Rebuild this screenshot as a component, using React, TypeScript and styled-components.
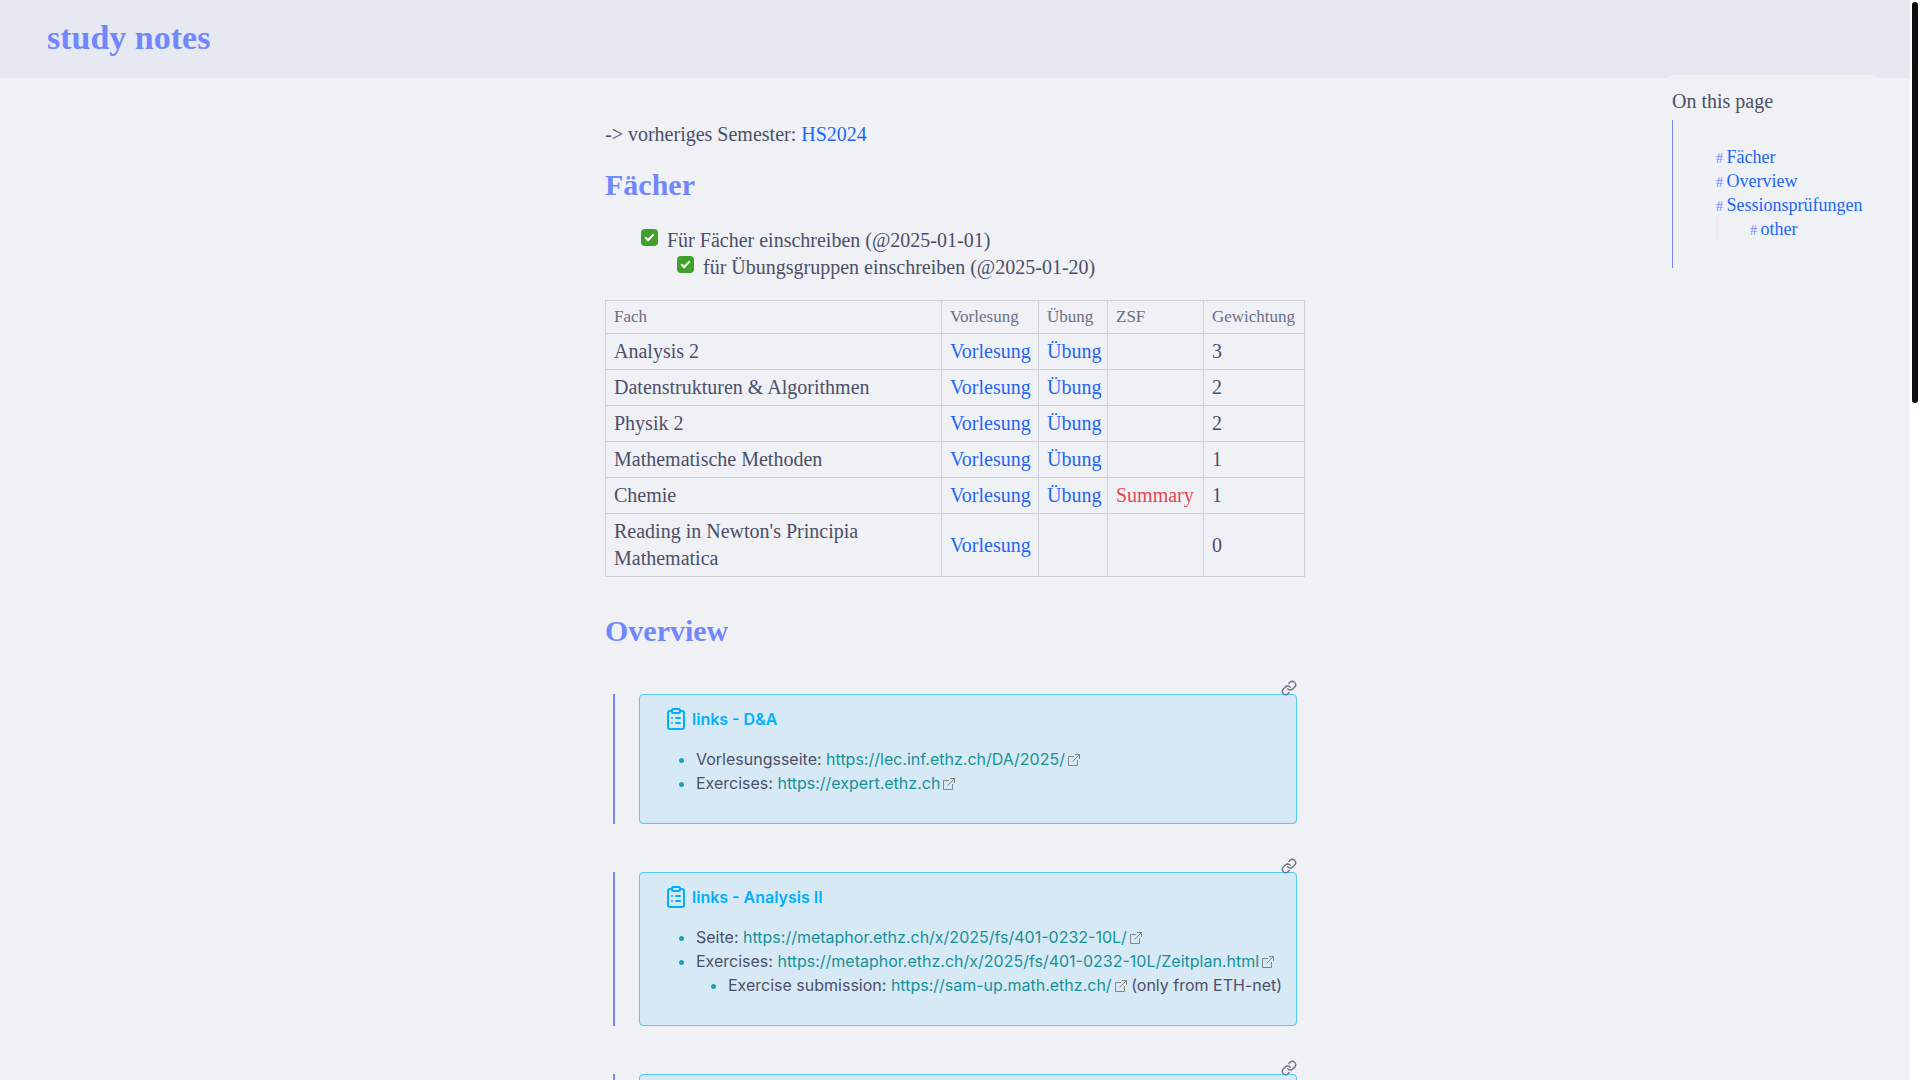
import React from "react";
import styled, { createGlobalStyle } from "styled-components";
import { ClipboardList, Link as LinkIcon } from "lucide-react";

const c = {
  base: "#eff1f5",
  mantle: "#e6e9f1",
  text: "#4c4f69",
  muted: "#6c6f85",
  border: "#ccd0da",
  lavender: "#7287fd",
  blue: "#1e66f5",
  maroon: "#e64553",
  teal: "#179299",
  sapphire: "#209fb5",
  green: "#40a02b",
  callout: "#00b0ff",
};

const serif = `"Liberation Serif", serif`;
const sans = `Inter, sans-serif`;

const GlobalStyle = createGlobalStyle`
  *, *::before, *::after { box-sizing: border-box; }
  body { margin: 0; background: ${c.base}; color: ${c.text}; font: 20px/27px ${serif}; }
  a { text-decoration: none; }
`;

const Shell = styled.div`
  display: grid;
  grid-template-columns: minmax(0, 1fr) 10px;
  height: 100vh;
`;

const Page = styled.div`
  position: relative;
  overflow-y: auto;
  scrollbar-width: none;
`;

const ScrollTrack = styled.div`
  background: #fff;
  padding: 2px;
`;

const ScrollThumb = styled.div`
  width: 6px;
  height: calc(37% + 3px);
  border-radius: 3px;
  background: #0c0e10;
`;

const Header = styled.header`
  height: 78px;
  padding: 18px 47px;
  background: ${c.mantle};
`;

const SiteTitle = styled.a`
  color: ${c.lavender};
  font-size: 34px;
  line-height: 40px;
  font-weight: 700;
`;

const Toc = styled.nav`
  position: absolute;
  top: 75px;
  right: 28px;
  width: 218px;
  padding: 13px 8px;
  border-radius: 12px;
  background: ${c.base};
`;

const TocTitle = styled.h2`
  margin: 0 0 5px;
  font-size: 20px;
  line-height: 27px;
  font-weight: 400;
`;

const TocBody = styled.div`
  padding: 25px 0 27px 43px;
  border-left: 1px solid ${c.lavender};
`;

const TocList = styled.ul<{ $nested?: boolean }>`
  margin: 0;
  padding: 0 0 0 ${(p) => (p.$nested ? "32px" : "0")};
  border-left: ${(p) => (p.$nested ? `2px solid ${c.mantle}` : "0")};
  list-style: none;
  font-size: 18px;
  line-height: 24px;
`;

const TocLink = styled.a`
  color: ${c.blue};
  &::before {
    content: "# ";
    color: ${c.lavender};
    font-size: 14px;
    line-height: 1;
  }
`;

const Article = styled.main`
  max-width: 700px;
  margin: 0 auto;
  padding: 43px 0 80px;
`;

const Paragraph = styled.p`
  margin: 0;
`;

const Heading = styled.h2`
  margin: 0;
  color: ${c.lavender};
  font-size: 30px;
  line-height: 36px;
  font-weight: 700;
`;

const FirstHeading = styled(Heading)`
  margin: 19px 0 24px;
`;

const SectionHeading = styled(Heading)`
  margin: 36px 0 45px;
`;

const TextLink = styled.a<{ $color?: string }>`
  color: ${(p) => p.$color ?? c.blue};
`;

const TaskList = styled.ul`
  margin: 0;
  padding: 0 0 0 36px;
  list-style: none;
`;

const TaskLabel = styled.label`
  display: flex;
  align-items: flex-start;
  gap: 9px;
`;

const TaskBox = styled.input`
  appearance: none;
  display: grid;
  place-items: center;
  width: 17px;
  height: 17px;
  margin: 2px 0 0;
  border-radius: 4px;
  background: ${c.green};
  &::after {
    content: "";
    width: 9px;
    height: 5px;
    margin-bottom: 3px;
    border: solid #fff;
    border-width: 0 0 2px 2px;
    transform: rotate(-45deg);
  }
`;

const Table = styled.table`
  width: 100%;
  margin-top: 19px;
  border-collapse: collapse;
  table-layout: fixed;
`;

const Col = styled.col<{ $w?: number }>`
  width: ${(p) => (p.$w ? `${p.$w}px` : "auto")};
`;

const Th = styled.th`
  padding: 4px 8px;
  border: 1px solid ${c.border};
  color: ${c.muted};
  font-size: 17px;
  line-height: 24px;
  font-weight: 400;
  text-align: left;
`;

const Td = styled.td`
  padding: 4px 8px;
  border: 1px solid ${c.border};
`;

const Quote = styled.blockquote`
  position: relative;
  margin: 0 8px 48px;
  padding-left: 24px;
  border-left: 2px solid ${c.lavender};
`;

const AnchorButton = styled.button`
  position: absolute;
  top: -14px;
  right: 0;
  display: flex;
  padding: 0;
  border: 0;
  background: none;
  color: ${c.muted};
`;

const Callout = styled.section`
  min-height: 130px;
  padding: 12px 12px 28px 24px;
  border: 1px solid #55c8f5;
  border-radius: 4px;
  background: #d6e9f4;
  font: 16px/24px ${sans};
`;

const CalloutTitle = styled.h3`
  display: flex;
  align-items: center;
  gap: 4px;
  margin: 0 0 16px;
  color: ${c.callout};
  font-size: 16px;
  line-height: 24px;
  font-weight: 600;
`;

const Bullets = styled.ul`
  margin: 0;
  padding-left: 32px;
  list-style: disc;
  white-space: nowrap;
  li::marker { color: ${c.sapphire}; }
`;

const ExternalSvg = styled.svg`
  width: 12px;
  height: 12px;
  margin-left: 3px;
  vertical-align: -1px;
`;

const External = ({ children }: { children: string }) => (
  <TextLink href={children} $color={c.teal}>
    {children}
    <ExternalSvg viewBox="0 0 12 12" fill="none" stroke="#858585" aria-hidden>
      <path d="M6 2.5H.5v9h9V6M7 .5h4.5V5M11.5.5l-7 7" />
    </ExternalSvg>
  </TextLink>
);

const CalloutBlock = ({ title, children }: { title?: string; children?: React.ReactNode }) => (
  <Quote>
    <Callout>
      {title && (
        <CalloutTitle>
          <ClipboardList size={24} />
          {title}
        </CalloutTitle>
      )}
      {children}
    </Callout>
    <AnchorButton type="button">
      <LinkIcon size={16} />
    </AnchorButton>
  </Quote>
);

const subjects = [
  { name: "Analysis 2", exercise: true, weight: 3 },
  { name: "Datenstrukturen & Algorithmen", exercise: true, weight: 2 },
  { name: "Physik 2", exercise: true, weight: 2 },
  { name: "Mathematische Methoden", exercise: true, weight: 1 },
  { name: "Chemie", exercise: true, summary: true, weight: 1 },
  { name: "Reading in Newton's Principia Mathematica", weight: 0 },
];

export default function App() {
  return (
    <Shell>
      <GlobalStyle />
      <Page>
        <Header>
          <SiteTitle href="#">study notes</SiteTitle>
        </Header>
        <Toc>
          <TocTitle>On this page</TocTitle>
          <TocBody>
            <TocList>
              <li><TocLink href="#faecher">Fächer</TocLink></li>
              <li><TocLink href="#overview">Overview</TocLink></li>
              <li>
                <TocLink href="#exams">Sessionsprüfungen</TocLink>
                <TocList $nested>
                  <li><TocLink href="#other">other</TocLink></li>
                </TocList>
              </li>
            </TocList>
          </TocBody>
        </Toc>
        <Article>
          <Paragraph>
            -&gt; vorheriges Semester: <TextLink href="#hs2024">HS2024</TextLink>
          </Paragraph>
          <FirstHeading id="faecher">Fächer</FirstHeading>
          <TaskList>
            <li>
              <TaskLabel>
                <TaskBox type="checkbox" defaultChecked />
                Für Fächer einschreiben (@2025-01-01)
              </TaskLabel>
              <TaskList>
                <li>
                  <TaskLabel>
                    <TaskBox type="checkbox" defaultChecked />
                    für Übungsgruppen einschreiben (@2025-01-20)
                  </TaskLabel>
                </li>
              </TaskList>
            </li>
          </TaskList>
          <Table>
            <colgroup>
              <Col />
              <Col $w={97} />
              <Col $w={69} />
              <Col $w={96} />
              <Col $w={101} />
            </colgroup>
            <thead>
              <tr>
                <Th>Fach</Th>
                <Th>Vorlesung</Th>
                <Th>Übung</Th>
                <Th>ZSF</Th>
                <Th>Gewichtung</Th>
              </tr>
            </thead>
            <tbody>
              {subjects.map((s) => (
                <tr key={s.name}>
                  <Td>{s.name}</Td>
                  <Td><TextLink href="#vorlesung">Vorlesung</TextLink></Td>
                  <Td>{s.exercise && <TextLink href="#uebung">Übung</TextLink>}</Td>
                  <Td>{s.summary && <TextLink href="#summary" $color={c.maroon}>Summary</TextLink>}</Td>
                  <Td>{s.weight}</Td>
                </tr>
              ))}
            </tbody>
          </Table>
          <SectionHeading id="overview">Overview</SectionHeading>
          <CalloutBlock title="links - D&A">
            <Bullets>
              <li>Vorlesungsseite: <External>https://lec.inf.ethz.ch/DA/2025/</External></li>
              <li>Exercises: <External>https://expert.ethz.ch</External></li>
            </Bullets>
          </CalloutBlock>
          <CalloutBlock title="links - Analysis II">
            <Bullets>
              <li>Seite: <External>https://metaphor.ethz.ch/x/2025/fs/401-0232-10L/</External></li>
              <li>
                Exercises: <External>https://metaphor.ethz.ch/x/2025/fs/401-0232-10L/Zeitplan.html</External>
                <Bullets>
                  <li>
                    Exercise submission: <External>https://sam-up.math.ethz.ch/</External> (only from ETH-net)
                  </li>
                </Bullets>
              </li>
            </Bullets>
          </CalloutBlock>
          <CalloutBlock />
        </Article>
      </Page>
      <ScrollTrack>
        <ScrollThumb />
      </ScrollTrack>
    </Shell>
  );
}
